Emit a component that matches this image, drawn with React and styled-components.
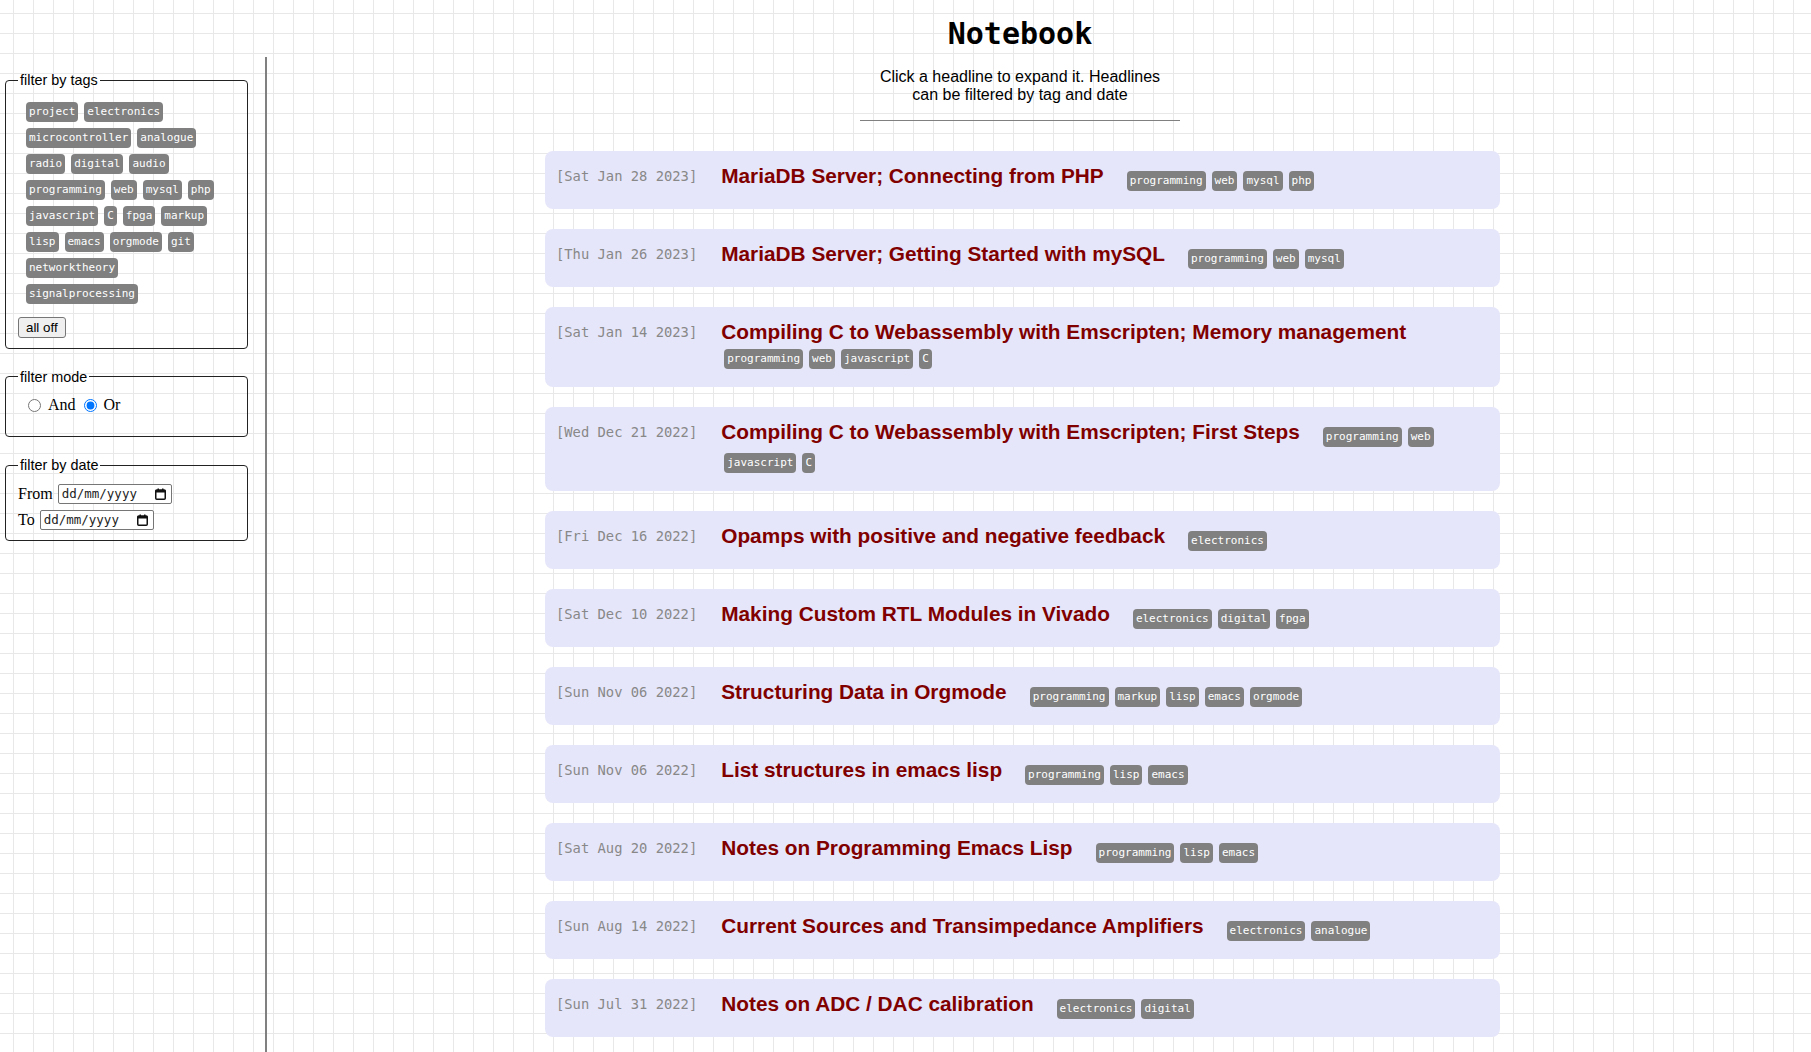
import styled, { createGlobalStyle } from "styled-components";

const allTags = [
  "project", "electronics", "microcontroller", "analogue", "radio", "digital",
  "audio", "programming", "web", "mysql", "php", "javascript", "C", "fpga",
  "markup", "lisp", "emacs", "orgmode", "git", "networktheory", "signalprocessing"
];

const notes = [
  { date: "Sat Jan 28 2023", title: "MariaDB Server; Connecting from PHP", tags: ["programming", "web", "mysql", "php"] },
  { date: "Thu Jan 26 2023", title: "MariaDB Server; Getting Started with mySQL", tags: ["programming", "web", "mysql"] },
  { date: "Sat Jan 14 2023", title: "Compiling C to Webassembly with Emscripten; Memory management", tags: ["programming", "web", "javascript", "C"] },
  { date: "Wed Dec 21 2022", title: "Compiling C to Webassembly with Emscripten; First Steps", tags: ["programming", "web", "javascript", "C"] },
  { date: "Fri Dec 16 2022", title: "Opamps with positive and negative feedback", tags: ["electronics"] },
  { date: "Sat Dec 10 2022", title: "Making Custom RTL Modules in Vivado", tags: ["electronics", "digital", "fpga"] },
  { date: "Sun Nov 06 2022", title: "Structuring Data in Orgmode", tags: ["programming", "markup", "lisp", "emacs", "orgmode"] },
  { date: "Sun Nov 06 2022", title: "List structures in emacs lisp", tags: ["programming", "lisp", "emacs"] },
  { date: "Sat Aug 20 2022", title: "Notes on Programming Emacs Lisp", tags: ["programming", "lisp", "emacs"] },
  { date: "Sun Aug 14 2022", title: "Current Sources and Transimpedance Amplifiers", tags: ["electronics", "analogue"] },
  { date: "Sun Jul 31 2022", title: "Notes on ADC / DAC calibration", tags: ["electronics", "digital"] }
];

const CalendarIcon = () => (
  <svg width="11" height="12" viewBox="0 0 11 12">
    <rect x="0.75" y="2" width="9.5" height="9.25" rx="1" fill="none" stroke="#111" strokeWidth="1.5" />
    <rect x="0.5" y="2" width="10" height="2.5" fill="#111" />
    <rect x="2.5" y="0.5" width="1.5" height="2" fill="#111" />
    <rect x="7" y="0.5" width="1.5" height="2" fill="#111" />
  </svg>
);

const DateField = ({ width }) => (
  <DateBox $width={width}>
    <span>dd/mm/yyyy</span>
    <CalendarIcon />
  </DateBox>
);

const App = () => {
  return (
    <>
      <GlobalStyle />
      <Page>
        <Sidebar>
          <Fieldset>
            <Legend>filter by tags</Legend>
            <TagCloud>
              {allTags.map((t) => (
                <Tag key={t} $side>{t}</Tag>
              ))}
            </TagCloud>
            <Button>all off</Button>
          </Fieldset>

          <Fieldset $bottom={21}>
            <Legend>filter mode</Legend>
            <RadioRow>
              <RadioLabel>
                <input type="radio" name="mode" />
                And
              </RadioLabel>
              <RadioLabel>
                <input type="radio" name="mode" defaultChecked />
                Or
              </RadioLabel>
            </RadioRow>
          </Fieldset>

          <Fieldset>
            <Legend>filter by date</Legend>
            <DateRows>
              <DateRow>
                From <DateField width={114} />
              </DateRow>
              <DateRow>
                To <DateField width={114} />
              </DateRow>
            </DateRows>
          </Fieldset>
        </Sidebar>

        <Main>
          <Header>
            <Title>Notebook</Title>
            <Intro>Click a headline to expand it. Headlines can be filtered by tag and date</Intro>
            <Rule />
          </Header>
          <List>
            {notes.map((n, i) => (
              <Card key={i}>
                <DateStamp>[{n.date}]</DateStamp>
                <Headline>
                  <Heading>{n.title}</Heading>
                  {n.tags.map((t) => (
                    <Tag key={t}>{t}</Tag>
                  ))}
                </Headline>
              </Card>
            ))}
          </List>
        </Main>
      </Page>
    </>
  );
};

export default App;

const GlobalStyle = createGlobalStyle`
  html, body {
    margin: 0;
    padding: 0;
  }
  body {
    min-height: 100vh;
    background-color: #fff;
    background-image:
      linear-gradient(to right, #e8e8e8 1px, transparent 1px),
      linear-gradient(to bottom, #e8e8e8 1px, transparent 1px);
    background-size: 20px 20px;
    background-position: 13px 13px;
    font-family: "Liberation Serif", serif;
    font-size: 16px;
    color: #000;
  }
`;

const Page = styled.div`
  display: flex;
  min-height: 100vh;
`;

const Sidebar = styled.aside`
  flex: none;
  box-sizing: border-box;
  width: 267px;
  margin-top: 57px;
  padding: 15px 0 0 5px;
  border-right: 2px solid #808080;
  display: flex;
  flex-direction: column;
  gap: 20px;
`;

const Fieldset = styled.fieldset`
  box-sizing: border-box;
  width: 243px;
  margin: 0;
  padding: 5px 12px ${(p) => p.$bottom || 10}px 12px;
  border: 1px solid #222;
  border-radius: 4px;
  min-width: 0;
`;

const Legend = styled.legend`
  padding: 0 2px;
  font-family: "Liberation Sans", Arial, sans-serif;
  font-size: 14.4px;
  line-height: 16.5px;
`;

const TagCloud = styled.div`
  display: flex;
  flex-wrap: wrap;
  padding: 5px 0 0 5px;
`;

const Tag = styled.span`
  display: inline-block;
  box-sizing: border-box;
  height: 20px;
  margin: ${(p) => (p.$side ? "3px" : "6px 3px 0")};
  padding: 3px 3px;
  border-radius: 4px;
  background: #808080;
  color: #fff;
  font-family: "DejaVu Sans Mono", monospace;
  font-size: 11px;
  line-height: 14px;
  white-space: nowrap;
`;

const Button = styled.button`
  display: block;
  margin-top: 10px;
  height: 21px;
  padding: 1px 7px;
  border: 1px solid #767676;
  border-radius: 3px;
  background: #efefef;
  color: #000;
  font-family: "Liberation Sans", Arial, sans-serif;
  font-size: 13.33px;
`;

const RadioRow = styled.div`
  display: flex;
  align-items: center;
  gap: 3px;
  height: 20px;
  margin-top: 5px;
  padding-left: 5px;
`;

const RadioLabel = styled.label`
  display: inline-flex;
  align-items: center;
  font-size: 16px;

  input {
    width: 13px;
    height: 13px;
    margin: 0 7px 0 5px;
  }
`;

const DateRows = styled.div`
  display: flex;
  flex-direction: column;
  gap: 6px;
  padding-top: 5px;
`;

const DateRow = styled.div`
  display: flex;
  align-items: center;
  gap: 5px;
  height: 20px;
`;

const DateBox = styled.span`
  display: inline-flex;
  align-items: center;
  justify-content: space-between;
  box-sizing: border-box;
  width: ${(p) => p.$width}px;
  height: 20px;
  padding: 0 5px 0 3px;
  border: 1px solid #767676;
  border-radius: 2px;
  background: #fff;
  font-family: "DejaVu Sans Mono", monospace;
  font-size: 12.5px;
  color: #222;
`;

const Main = styled.main`
  flex: 1;
  display: flex;
  flex-direction: column;
  align-items: center;
  padding-right: 33px;
`;

const Header = styled.header`
  display: flex;
  flex-direction: column;
  align-items: center;
  padding-right: 5px;
`;

const Title = styled.h1`
  margin: 16px 0 0;
  font-family: "DejaVu Sans Mono", monospace;
  font-size: 30px;
  line-height: 36px;
  font-weight: bold;
`;

const Intro = styled.p`
  width: 292px;
  margin: 16px 0 0;
  text-align: center;
  font-family: "Liberation Sans", Arial, sans-serif;
  font-size: 16px;
  line-height: 18.4px;
`;

const Rule = styled.hr`
  width: 320px;
  margin: 15px 0 0;
  border: none;
  border-top: 1px solid #808080;
`;

const List = styled.div`
  display: flex;
  flex-direction: column;
  gap: 20px;
  margin-top: 30px;
`;

const Card = styled.div`
  box-sizing: border-box;
  width: 955px;
  display: flex;
  align-items: flex-start;
  padding: 14px 10px 18px 11px;
  border-radius: 8px;
  background: #e6e6fa;
`;

const DateStamp = styled.span`
  flex: none;
  margin-right: 24px;
  font-family: "DejaVu Sans Mono", monospace;
  font-size: 13.8px;
  line-height: 22px;
  color: #888;
  white-space: nowrap;
`;

const Headline = styled.div`
  flex: 1;
  display: flex;
  flex-wrap: wrap;
  align-items: flex-start;
`;

const Heading = styled.h3`
  margin: 0 20px 0 0;
  font-family: "Liberation Sans", Arial, sans-serif;
  font-size: 20.8px;
  line-height: 22px;
  font-weight: bold;
  color: #800000;
  cursor: pointer;
`;
